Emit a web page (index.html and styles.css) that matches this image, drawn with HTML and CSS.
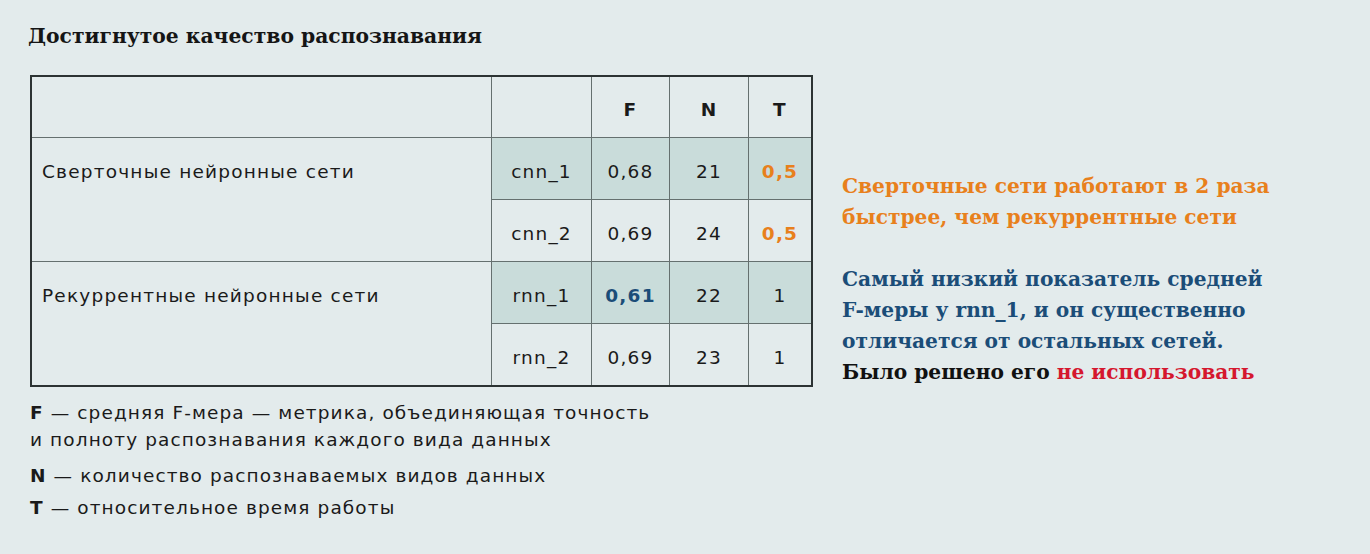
FILE: index.html
```html
<!DOCTYPE html>
<html lang="ru">
<head>
<meta charset="utf-8">
<link rel="stylesheet" href="styles.css">
</head>
<body>
<div class="page">
  <div class="left">
    <h1 class="title">Достигнутое качество распознавания</h1>
    <table class="grid">
      <tr class="head">
        <td class="label"></td>
        <td class="name"></td>
        <td class="num"><b>F</b></td>
        <td class="num"><b>N</b></td>
        <td class="num"><b>T</b></td>
      </tr>
      <tr class="hl">
        <td class="label" rowspan="2"><div class="lbl">Сверточные нейронные сети</div></td>
        <td class="name">cnn_1</td>
        <td class="num">0,68</td>
        <td class="num">21</td>
        <td class="num orange">0,5</td>
      </tr>
      <tr>
        <td class="name">cnn_2</td>
        <td class="num">0,69</td>
        <td class="num">24</td>
        <td class="num orange">0,5</td>
      </tr>
      <tr class="hl">
        <td class="label" rowspan="2"><div class="lbl">Рекуррентные нейронные сети</div></td>
        <td class="name">rnn_1</td>
        <td class="num blue">0,61</td>
        <td class="num">22</td>
        <td class="num">1</td>
      </tr>
      <tr>
        <td class="name">rnn_2</td>
        <td class="num">0,69</td>
        <td class="num">23</td>
        <td class="num">1</td>
      </tr>
    </table>
    <div class="legend">
      <p class="lg lg1"><b>F</b> — средняя F-мера — метрика, объединяющая точность<br>и полноту распознавания каждого вида данных</p>
      <p class="lg lg2"><b>N</b> — количество распознаваемых видов данных</p>
      <p class="lg"><b>T</b> — относительное время работы</p>
    </div>
  </div>
  <div class="notes">
    <p class="note o">Сверточные сети работают в 2 раза<br>быстрее, чем рекуррентные сети</p>
    <p class="note b">Самый низкий показатель средней<br>F-меры у rnn_1, и он существенно<br>отличается от остальных сетей.<br><span class="k">Было решено его <span class="r">не использовать</span></span></p>
  </div>
</div>
</body>
</html>
```

FILE: styles.css
```css
html, body {
  margin: 0;
  padding: 0;
  background: #e3ebec;
}
.page {
  display: flex;
  width: 1370px;
  height: 554px;
  box-sizing: border-box;
  padding: 22px 0 0 28px;
}
.left {
  width: 790px;
}
.title {
  margin: 0;
  font-family: "DejaVu Serif", serif;
  font-weight: bold;
  font-size: 20.3px;
  line-height: 28px;
  color: #151515;
}
.grid {
  margin: 25px 0 0 2px;
  border-collapse: collapse;
  border: 2px solid #2c3333;
  font-family: "DejaVu Sans", sans-serif;
  font-size: 18.5px;
  letter-spacing: 1.2px;
  color: #1a1a1a;
}
.grid td {
  border: 1px solid #65706f;
  height: 56px;
  padding: 5px 0 0 0;
  text-align: center;
  vertical-align: middle;
}
.grid tr.head td {
  height: 55px;
}
.grid td.label {
  width: 459px;
  padding: 0;
  text-align: left;
  vertical-align: top;
}
.lbl {
  padding: 22px 0 0 10px;
  line-height: 24px;
}
.grid td.name { width: 99px; }
.grid td.num:nth-last-child(3) { width: 77px; }
.grid td.num:nth-last-child(2) { width: 78px; }
.grid td.num:nth-last-child(1) { width: 62px; }
.grid tr.hl td:not(.label) {
  background: #c9dcda;
}
.orange { color: #e8801c; font-weight: bold; }
.blue { color: #1b4d78; font-weight: bold; }
.legend {
  margin-top: 12px;
  padding-left: 2px;
  font-family: "DejaVu Sans", sans-serif;
  font-size: 18.5px;
  letter-spacing: 1.1px;
  color: #1a1a1a;
}
.lg {
  margin: 0;
  line-height: 27px;
}
.lg1 { margin-bottom: 9px; }
.lg2 { margin-bottom: 5px; }
.notes {
  padding: 149px 0 0 24px;
}
.note {
  margin: 0 0 31px 0;
  font-family: "DejaVu Serif", serif;
  font-weight: bold;
  font-size: 20.2px;
  line-height: 31px;
}
.note.o { color: #e8801c; }
.note.b { color: #1b4d78; }
.k { color: #111; }
.r { color: #d5172e; }
```
